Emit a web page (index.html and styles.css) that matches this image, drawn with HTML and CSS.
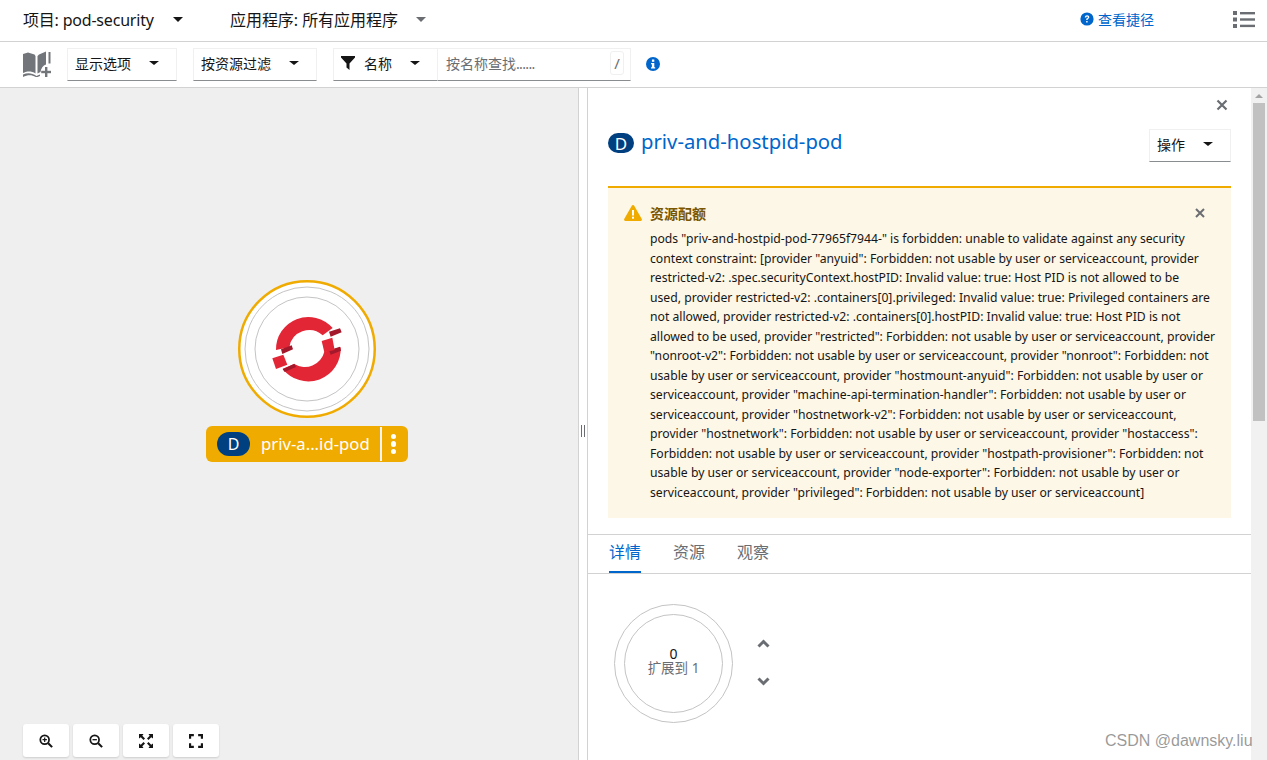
FILE: index.html
```html
<!DOCTYPE html>
<html lang="zh">
<head>
<meta charset="utf-8">
<title>拓扑</title>
<link rel="stylesheet" href="styles.css">
</head>
<body>
<div class="app">
  <header class="topbar">
    <div class="selector project"><span>项目: pod-security</span><i class="caret dark"></i></div>
    <div class="selector application"><span>应用程序: 所有应用程序</span><i class="caret grey"></i></div>
    <a class="shortcuts">
      <svg class="help-icon" viewBox="0 0 14 14"><circle cx="7" cy="7" r="6.6" fill="#0066cc"/><path d="M4.8 5.4C4.9 4 5.9 3.2 7.1 3.2c1.300 0 2.200.8 2.200 1.900 0 1-.6 1.400-1.200 1.800-.5.3-.6.500-.6 1.100H6.200c0-1 .3-1.500 1-1.900.5-.3.7-.5.7-.9 0-.4-.3-.7-.8-.7-.5 0-.8.3-.9.9H4.800z" fill="#fff"/><rect x="6.200" y="9" width="1.400" height="1.500" fill="#fff"/></svg>
      <span>查看捷径</span>
    </a>
    <svg class="list-icon" viewBox="0 0 22 17"><g fill="#6a6e73"><rect x="0" y="0" width="4" height="4"/><rect x="0" y="6.500" width="4" height="4"/><rect x="0" y="13" width="4" height="4"/><rect x="7" y="1" width="15" height="2.400"/><rect x="7" y="7.300" width="15" height="2.400"/><rect x="7" y="13.700" width="15" height="2.400"/></g></svg>
  </header>

  <div class="toolbar">
    <svg class="book-icon" viewBox="0 0 28 26"><g fill="#72767b"><path d="M0 3 5 1.500 11.500 3.500 12.500 5V22.500C9 20 4 20 1.500 21.500L0 22z"/><path d="M14.500 5 16 3.500 23 0.500V13.500C20 14.500 18 17.500 17.500 21L14.500 22.500z"/><rect x="25.500" y="1" width="2" height="11.500"/><path d="M0 23.500C4 21.500 9 21.500 13.500 25 14.500 24.500 15.500 24 17 23.500V25L13.500 26.500C9 23.500 5 23.500 0 26z"/><rect x="22" y="16" width="2.400" height="10"/><rect x="18.200" y="19.800" width="9.800" height="2.400"/></g></svg>
    <div class="dropdown display"><span>显示选项</span><i class="caret dark small"></i></div>
    <div class="dropdown resource"><span>按资源过滤</span><i class="caret dark small"></i></div>
    <div class="filter-group">
      <div class="dropdown name">
        <svg class="funnel" viewBox="0 0 14 14"><path d="M0 0H14V1.500L8.500 7.500V14L5.500 11.500V7.500L0 1.500z" fill="#151515"/></svg>
        <span>名称</span><i class="caret dark small"></i>
      </div>
      <div class="search"><span class="placeholder">按名称查找<span class="dots">......</span></span><kbd class="slash">/</kbd></div>
    </div>
    <svg class="info-icon" viewBox="0 0 14 14"><circle cx="7" cy="7" r="7" fill="#0066cc"/><rect x="5.900" y="2.500" width="2.400" height="2.300" fill="#fff"/><path d="M5 6H8.300V10.200H9.200V11.500H5V10.200H5.900V7.300H5z" fill="#fff"/></svg>
  </div>

  <main class="workspace">
    <section class="canvas">
      <div class="node">
        <svg class="node-art" viewBox="0 0 140 140">
          <circle cx="69" cy="69" r="67.750" fill="#fff" stroke="#f0ab00" stroke-width="2.500"/>
          <circle cx="69" cy="69" r="62" fill="#fff" stroke="#c4c4c4" stroke-width="1"/>
          <circle cx="69" cy="69" r="52" fill="#fff" stroke="#c4c4c4" stroke-width="1"/>
          <g transform="translate(-38 -10) scale(.33333)">
            <path d="M228 240A97 97 0 0 1 398 174L368 196A60 60 0 0 0 268 232z" fill="#e32636"/>
            <path d="M243 238 275 226 279 238 247 252z" fill="#a3182a"/>
            <path d="M387 185 420 175 425 187 392 200z" fill="#a3182a"/>
            <path d="M422 232A97 97 0 0 1 248 296L283 282A60 60 0 0 0 373 245z" fill="#e32636"/>
            <path d="M387 241 420 230 423 242 392 254z" fill="#a3182a"/>
            <path d="M217 265 250 254 262 284 228 297z" fill="#e32636"/>
            <path d="M365 213 397 203 404 240 373 247z" fill="#e32636"/>
            <path d="M248 298 283 281 288 291 254 306z" fill="#a3182a"/>
          </g>
        </svg>
      </div>
      <div class="node-label">
        <span class="badge label-badge">D</span>
        <span class="label-text">priv-a...id-pod</span>
        <span class="label-menu"><i></i><i></i><i></i></span>
      </div>
      <div class="zoom-controls">
        <button class="zoom-btn"><svg viewBox="0 0 16 16"><circle cx="6.500" cy="6.500" r="5" fill="none" stroke="#151515" stroke-width="2"/><path d="M10.500 10.500 15 15" stroke="#151515" stroke-width="2.400"/><path d="M4 6.500H9M6.500 4V9" stroke="#151515" stroke-width="1.400"/></svg></button>
        <button class="zoom-btn"><svg viewBox="0 0 16 16"><circle cx="6.500" cy="6.500" r="5" fill="none" stroke="#151515" stroke-width="2"/><path d="M10.500 10.500 15 15" stroke="#151515" stroke-width="2.400"/><path d="M4 6.500H9" stroke="#151515" stroke-width="1.500"/></svg></button>
        <button class="zoom-btn"><svg viewBox="0 0 14 14"><g fill="#151515"><path d="M0 0H4.500L3.300 1.800 6 4.500 4.500 6 1.800 3.300 0 4.500z"/><path d="M14 0H9.500L10.700 1.800 8 4.500 9.500 6 12.200 3.300 14 4.500z"/><path d="M0 14H4.500L3.300 12.200 6 9.500 4.500 8 1.800 10.700 0 9.500z"/><path d="M14 14H9.500L10.700 12.200 8 9.500 9.500 8 12.200 10.700 14 9.500z"/></g></svg></button>
        <button class="zoom-btn"><svg viewBox="0 0 13 13"><path d="M1 4.500V1H4.500M8.500 1H12V4.500M12 8.500V12H8.500M4.500 12H1V8.500" fill="none" stroke="#151515" stroke-width="2"/></svg></button>
      </div>
    </section>

    <div class="gutter"><span class="grip"></span></div>

    <section class="panel">
      <div class="panel-body">
        <div class="panel-close-row">
          <svg class="close-icon" viewBox="0 0 12 12"><path d="M1.500 1.500 10.500 10.500M10.500 1.500 1.500 10.500" stroke="#6a6e73" stroke-width="2.200"/></svg>
        </div>
        <div class="panel-heading">
          <span class="badge title-badge">D</span>
          <h1 class="panel-title">priv-and-hostpid-pod</h1>
          <div class="dropdown actions"><span>操作</span><i class="caret dark small"></i></div>
        </div>
        <div class="alert">
          <div class="alert-head">
            <svg class="warn-icon" viewBox="0 0 18 16"><path d="M9 0C9.500 0 10 .3 10.200 .7L17.800 14C18.200 14.800 17.700 16 16.700 16H1.300C.3 16-.2 14.800 .2 14L7.800 .7C8 .3 8.500 0 9 0z" fill="#f0ab00"/><rect x="8" y="5" width="2" height="5.500" fill="#fff"/><rect x="8" y="11.700" width="2" height="2" fill="#fff"/></svg>
            <strong class="alert-title">资源配额</strong>
            <svg class="alert-close" viewBox="0 0 10 10"><path d="M1 1 9 9M9 1 1 9" stroke="#6a6e73" stroke-width="2"/></svg>
          </div>
          <p class="alert-text">pods "priv-and-hostpid-pod-77965f7944-" is forbidden: unable to validate against any security<br>context constraint: [provider "anyuid": Forbidden: not usable by user or serviceaccount, provider<br>restricted-v2: .spec.securityContext.hostPID: Invalid value: true: Host PID is not allowed to be<br>used, provider restricted-v2: .containers[0].privileged: Invalid value: true: Privileged containers are<br>not allowed, provider restricted-v2: .containers[0].hostPID: Invalid value: true: Host PID is not<br>allowed to be used, provider "restricted": Forbidden: not usable by user or serviceaccount, provider<br>"nonroot-v2": Forbidden: not usable by user or serviceaccount, provider "nonroot": Forbidden: not<br>usable by user or serviceaccount, provider "hostmount-anyuid": Forbidden: not usable by user or<br>serviceaccount, provider "machine-api-termination-handler": Forbidden: not usable by user or<br>serviceaccount, provider "hostnetwork-v2": Forbidden: not usable by user or serviceaccount,<br>provider "hostnetwork": Forbidden: not usable by user or serviceaccount, provider "hostaccess":<br>Forbidden: not usable by user or serviceaccount, provider "hostpath-provisioner": Forbidden: not<br>usable by user or serviceaccount, provider "node-exporter": Forbidden: not usable by user or<br>serviceaccount, provider "privileged": Forbidden: not usable by user or serviceaccount]</p>
        </div>
        <nav class="tabs">
          <span class="tab active">详情</span>
          <span class="tab">资源</span>
          <span class="tab">观察</span>
        </nav>
        <div class="details">
          <div class="pod-ring">
            <div class="pod-ring-inner">
              <span class="pod-count">0</span>
              <span class="pod-caption">扩展到 1</span>
            </div>
          </div>
          <div class="scale-arrows">
            <svg viewBox="0 0 13 9"><path d="M1.500 7.500 6.500 2.500 11.500 7.500" fill="none" stroke="#6a6e73" stroke-width="3"/></svg>
            <svg viewBox="0 0 13 9"><path d="M1.500 1.500 6.500 6.500 11.500 1.500" fill="none" stroke="#6a6e73" stroke-width="3"/></svg>
          </div>
        </div>
      </div>
      <div class="scrollbar"><i class="scroll-up"></i><div class="scroll-thumb"></div></div>
    </section>
  </main>
  <div class="watermark">CSDN @dawnsky.liu</div>
</div>
</body>
</html>
```
FILE: styles.css
```css
* { box-sizing: border-box; }
html, body { margin: 0; padding: 0; height: 100%; overflow: hidden; background: #fff; }
body { font-family: "Noto Sans", "Noto Sans CJK SC", sans-serif; color: #151515; }
.app { position: relative; width: 1267px; height: 760px; display: flex; flex-direction: column; overflow: hidden; }

.caret { display: block; width: 0; height: 0; border-style: solid; border-width: 5px 5.5px 0; border-color: #151515 transparent transparent; }
.caret.grey { border-top-color: #6a6e73; }
.caret.small { border-width: 4.5px 5px 0; }

.topbar { height: 42px; flex: none; display: flex; align-items: center; border-bottom: 1px solid #d2d2d2; padding: 0 12px 3px 23px; font-size: 16px; }
.selector { display: flex; align-items: center; }
.project { width: 207px; letter-spacing: -.2px; }
.project .caret { margin-left: 19px; }
.application { letter-spacing: -.05px; }
.application .caret { margin-left: 18px; }
.shortcuts { margin-left: auto; display: flex; align-items: center; gap: 4px; color: #0066cc; font-size: 14px; margin-right: 79px; }
.help-icon { width: 14px; height: 14px; }
.list-icon { width: 22px; height: 17px; }

.toolbar { height: 46px; flex: none; display: flex; align-items: center; border-bottom: 1px solid #d2d2d2; padding: 0 0 1px 23px; font-size: 14px; }
.book-icon { width: 28px; height: 26px; margin-right: 16px; }
.dropdown { height: 33px; display: flex; align-items: center; justify-content: space-between; border: 1px solid #f0f0f0; border-bottom-color: #8a8d90; padding: 0 17px 2px 7px; }
.display { width: 110px; margin-right: 16px; }
.resource { width: 124px; margin-right: 16px; }
.filter-group { display: flex; width: 298px; margin-right: 15px; }
.name { width: 104px; border-right: 0; justify-content: flex-start; }
.funnel { width: 14px; height: 14px; margin-right: 9px; }
.name .caret { margin-left: auto; }
.search { flex: 1; height: 33px; display: flex; align-items: center; justify-content: space-between; border: 1px solid #f0f0f0; border-bottom-color: #8a8d90; padding: 0 6px 2px 8px; }
.placeholder { color: #6a6e73; }
.dots { letter-spacing: -.65px; }
.slash { width: 14px; height: 24px; display: flex; align-items: center; justify-content: center; border: 1px solid #f0f0f0; border-radius: 3px; font: 15px "Noto Sans", sans-serif; color: #6a6e73; }
.info-icon { width: 14px; height: 14px; }

.workspace { flex: 1; min-height: 0; display: flex; }
.canvas { position: relative; width: 579px; background: #efefef; border-right: 1px solid #d2d2d2; }
.gutter { width: 9px; border-right: 1px solid #d2d2d2; display: flex; align-items: center; justify-content: center; padding-top: 14px; }
.grip { display: block; width: 4px; height: 12px; border-left: 1px solid #6a6e73; border-right: 1px solid #6a6e73; }

.node { position: absolute; left: 238px; top: 192px; width: 140px; height: 140px; }
.node-art { display: block; width: 140px; height: 140px; }
.node-label { position: absolute; left: 206px; top: 338px; width: 202px; height: 36px; background: #f0ab00; border-radius: 6px; display: flex; align-items: center; color: #fff; font-size: 16.700px; padding-left: 11px; }
.badge { display: flex; align-items: center; justify-content: center; background: #004080; color: #fff; border-radius: 13px; }
.label-badge { width: 33px; height: 24px; font-size: 16px; }
.label-text { margin-left: 11px; width: 119px; white-space: nowrap; padding-bottom: 2px; }
.label-menu { height: 34px; width: 28px; border-left: 2px solid #f4f4f4; display: flex; flex-direction: column; align-items: center; justify-content: center; gap: 2px; padding-right: 3px; }
.label-menu i { display: block; width: 5.500px; height: 5.500px; border-radius: 50%; background: #fff; }

.zoom-controls { position: absolute; left: 23px; bottom: 3px; display: flex; gap: 4px; }
.zoom-btn { width: 46px; height: 33px; padding: 0; border: 0; border-radius: 3px; background: #fff; box-shadow: 0 1px 2px rgba(3, 3, 3, .14); display: flex; align-items: center; justify-content: center; }
.zoom-btn svg { width: 14px; height: 14px; }

.panel { flex: 1; min-width: 0; display: flex; }
.panel-body { flex: 1; min-width: 0; display: flex; flex-direction: column; }
.panel-close-row { height: 41px; display: flex; justify-content: flex-end; padding: 11px 23px 0 0; flex: none; }
.close-icon { width: 12px; height: 12px; }
.panel-heading { height: 57px; flex: none; display: flex; align-items: flex-start; padding: 0 20px 0 20px; }
.title-badge { width: 26px; height: 20px; font-size: 17px; margin-top: 4px; }
.panel-title { margin: -1px 0 0 7px; font-size: 20.300px; font-weight: 400; color: #0066cc; line-height: 26px; white-space: nowrap; }
.actions { width: 82px; height: 33px; margin-left: auto; font-size: 14px; padding: 0 17px 3px 7px; }

.alert { margin: 0 20px; height: 332px; flex: none; background: #fdf7e7; border-top: 2px solid #f0ab00; padding: 15px 15px 0 16px; }
.alert-head { display: flex; align-items: center; height: 20px; }
.warn-icon { width: 18px; height: 16px; margin-right: 8px; }
.alert-title { font-size: 14px; color: #795600; font-weight: 700; }
.alert-close { width: 10px; height: 10px; margin-left: auto; margin-right: 11px; }
.alert-text { margin: 6px 0 0 26px; font-size: 12.200px; line-height: 19.500px; white-space: nowrap; color: #151515; }

.tabs { margin-top: 16px; height: 40px; flex: none; display: flex; gap: 32px; padding-left: 21px; border-top: 1px solid #d2d2d2; border-bottom: 1px solid #d2d2d2; }
.tab { display: flex; align-items: center; color: #6a6e73; font-size: 16px; padding-bottom: 7px; }
.tab.active { color: #0066cc; border-bottom: 2px solid #0066cc; height: 38px; padding-bottom: 5px; }

.details { flex: 1; display: flex; padding: 30px 0 0 26px; }
.pod-ring { width: 119px; height: 119px; border: 1px solid #c4c4c4; border-radius: 50%; display: flex; align-items: center; justify-content: center; }
.pod-ring-inner { width: 99px; height: 99px; border: 1px solid #c4c4c4; border-radius: 50%; display: flex; flex-direction: column; align-items: center; justify-content: center; padding-bottom: 5px; }
.pod-count { font-size: 14px; line-height: 14px; }
.pod-caption { font-size: 13.500px; line-height: 15px; color: #6a6e73; }
.scale-arrows { margin: 35px 0 0 24px; height: 47px; display: flex; flex-direction: column; justify-content: space-between; }
.scale-arrows svg { display: block; width: 13px; height: 9px; }

.scrollbar { width: 16px; flex: none; background: #f1f1f1; display: flex; flex-direction: column; align-items: center; padding-top: 6px; }
.scroll-up { display: block; width: 0; height: 0; border-style: solid; border-width: 0 4px 4px; border-color: transparent transparent #a3a3a3; }
.scroll-thumb { width: 12px; height: 318px; margin-top: 5px; background: #c1c1c1; }

.watermark { position: absolute; left: 1105px; top: 731px; font-size: 16px; line-height: 20px; color: rgba(120, 120, 120, .75); font-family: "Liberation Sans", sans-serif; white-space: nowrap; }
```
